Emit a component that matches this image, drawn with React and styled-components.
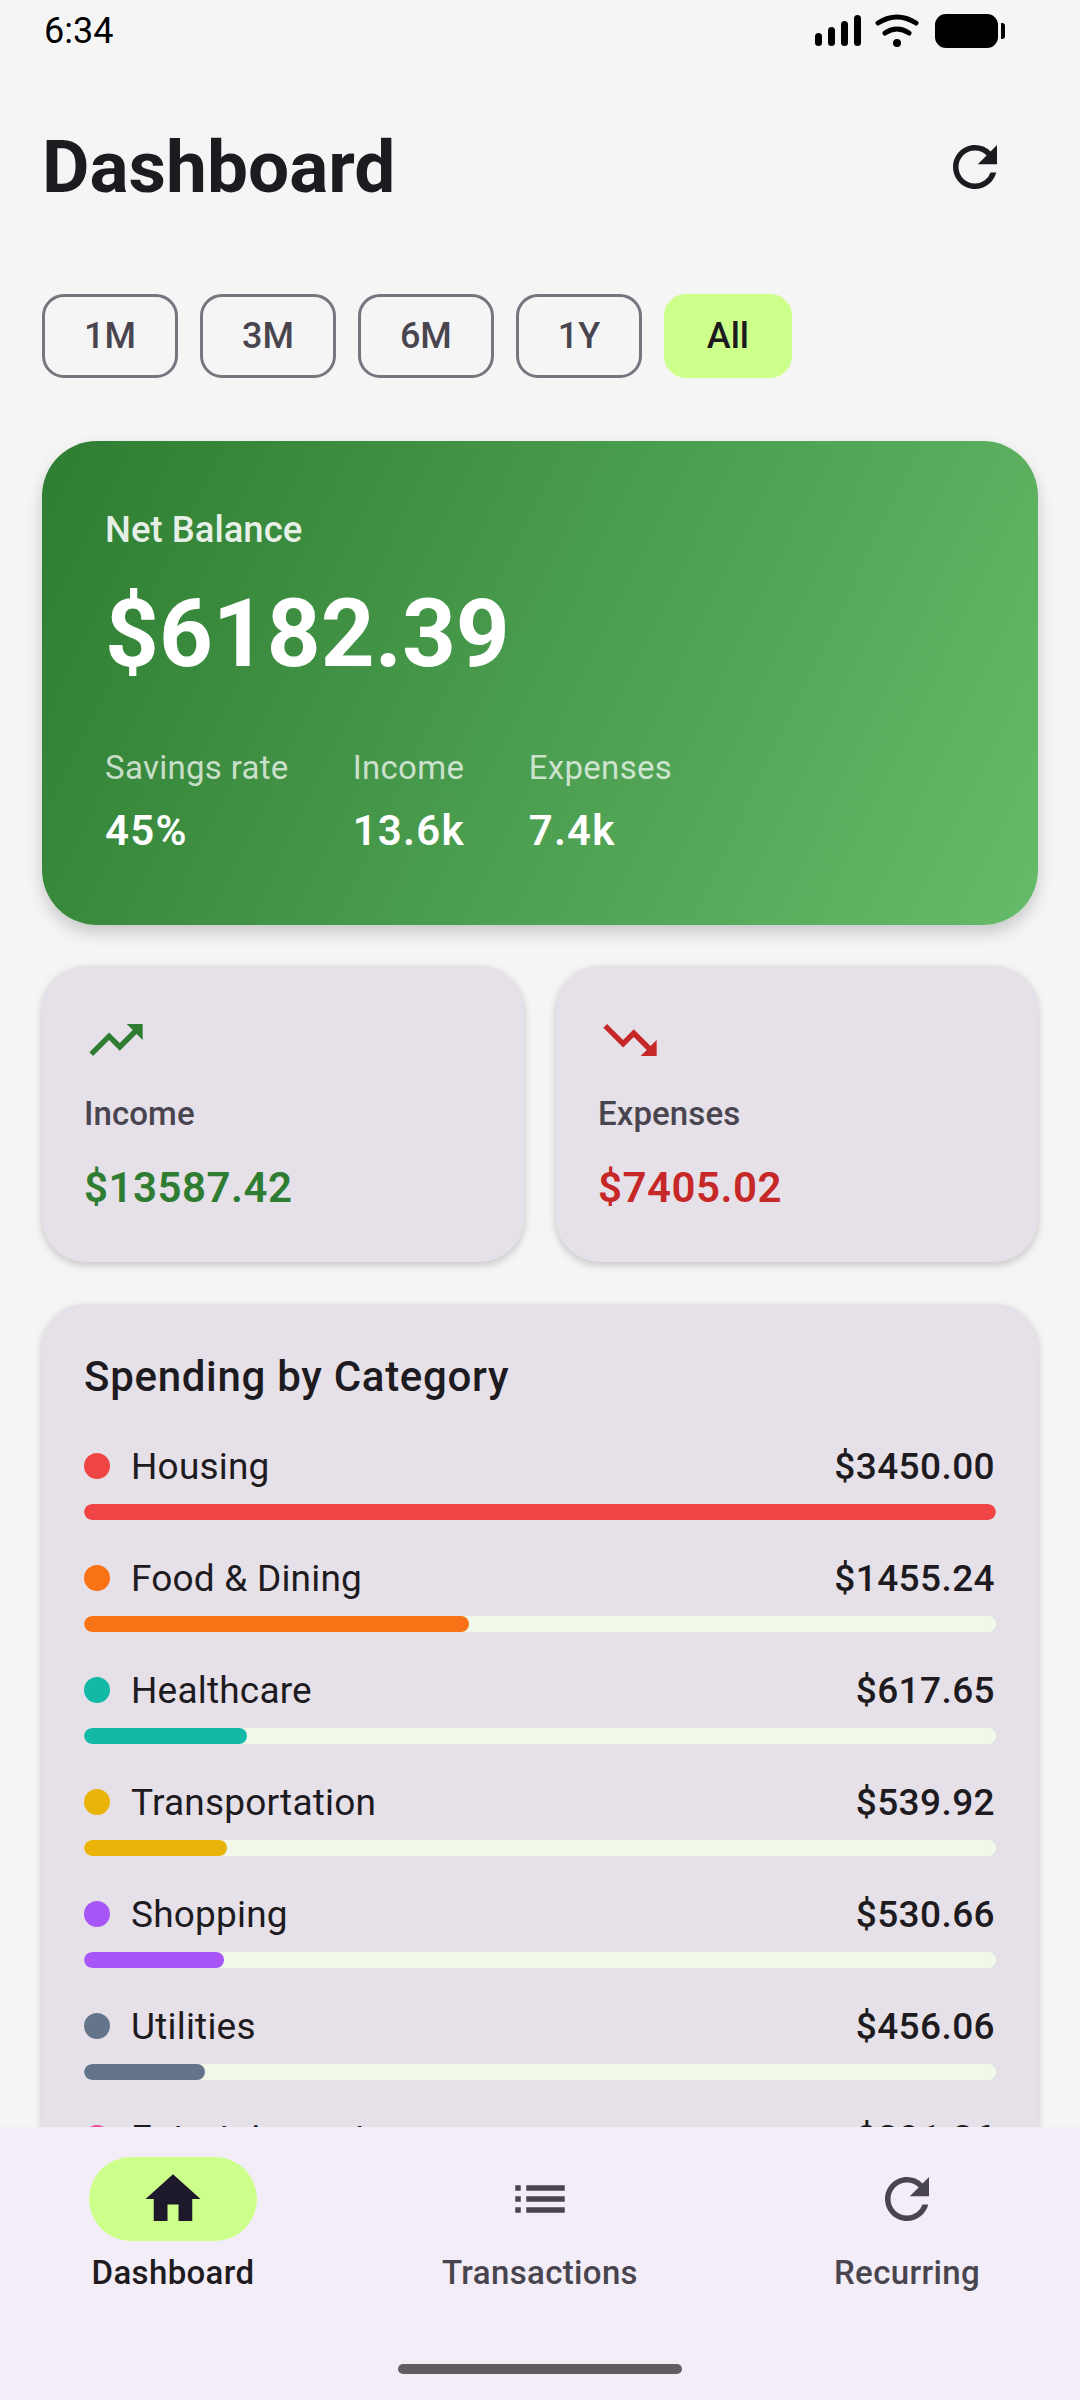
import React from 'react';
import styled, { createGlobalStyle } from 'styled-components';
import { MdRefresh, MdTrendingUp, MdTrendingDown, MdHome, MdList } from 'react-icons/md';

const GlobalStyle = createGlobalStyle`
  html, body {
    margin: 0;
    padding: 0;
    background: #f5f5f5;
    font-family: Roboto, "Noto Sans", sans-serif;
  }
  * { box-sizing: border-box; }
`;

const Screen = styled.div`
  width: 1080px;
  height: 2400px;
  display: flex;
  flex-direction: column;
  overflow: hidden;
  background: #f5f5f5;
  color: #1d1b20;
`;
const Scroll = styled.div`
  flex: 1;
  min-height: 0;
  overflow: hidden;
`;
const StatusBar = styled.div`
  height: 62px;
  padding: 10px 73px 0 44px;
  display: flex;
  justify-content: space-between;
  align-items: flex-start;
  font-size: 36px;
  line-height: 42px;
  color: #000;
`;
const StatusIcons = styled.svg`
  display: block;
  margin-top: 4px;
`;
const Header = styled.div`
  height: 210px;
  padding: 0 42px;
  display: flex;
  align-items: center;
  justify-content: space-between;
`;
const Title = styled.h1`
  margin: 0;
  font-size: 73px;
  line-height: 86px;
  font-weight: 700;
  color: #1d1b20;
`;
const RefreshButton = styled.div`
  width: 66px;
  height: 66px;
  margin-right: 30px;
  color: #1d1b20;
  font-size: 66px;
  line-height: 0;
`;
const Chips = styled.div`
  margin-top: 22px;
  padding: 0 42px;
  display: flex;
  gap: 22px;
`;
const Chip = styled.div`
  height: 84px;
  padding: 0 ${props => props.$pad || 39}px;
  display: flex;
  align-items: center;
  border-radius: 22px;
  border: 3px solid ${props => props.$active ? '#cdff8b' : '#79747e'};
  background: ${props => props.$active ? '#cdff8b' : 'transparent'};
  color: ${props => props.$active ? '#1d1b20' : '#49454f'};
  font-size: 36px;
  font-weight: 500;
`;
const BalanceCard = styled.div`
  margin: 63px 42px 0;
  height: 484px;
  padding: 65px 63px 0;
  border-radius: 55px;
  background: linear-gradient(115.8deg, #2e7d32 0%, #66bb6a 100%);
  color: #fff;
  box-shadow: 0 8px 16px rgba(0, 0, 0, 0.18);
`;
const BalanceLabel = styled.div`
  font-size: 36.5px;
  line-height: 48px;
  font-weight: 500;
  color: rgba(255, 255, 255, 0.88);
`;
const BalanceValue = styled.div`
  margin-top: 20px;
  font-size: 94px;
  line-height: 120px;
  font-weight: 700;
`;
const Stats = styled.div`
  margin-top: 54px;
  display: flex;
  gap: 64px;
`;
const StatLabel = styled.div`
  font-size: 33px;
  line-height: 40px;
  letter-spacing: 0.3px;
  color: rgba(255, 255, 255, 0.72);
`;
const StatValue = styled.div`
  margin-top: 18px;
  font-size: 42px;
  line-height: 50px;
  font-weight: 600;
  letter-spacing: 1.2px;
`;
const SummaryRow = styled.div`
  margin: 41px 42px 0;
  display: grid;
  grid-template-columns: 1fr 1fr;
  gap: 32px;
`;
const SummaryCard = styled.div`
  height: 296px;
  padding: 42px 42px 0;
  border-radius: 44px;
  background: #e6e0e9;
  box-shadow: 0 3px 8px rgba(0, 0, 0, 0.2);
`;
const SummaryIcon = styled.div`
  height: 66px;
  font-size: 64px;
  line-height: 0;
  color: ${props => props.$color};
`;
const SummaryLabel = styled.div`
  margin-top: 19px;
  font-size: 33px;
  line-height: 42px;
  font-weight: 500;
  letter-spacing: 0.1px;
  color: #49454f;
`;
const SummaryValue = styled.div`
  margin-top: 27px;
  font-size: 42px;
  line-height: 52px;
  font-weight: 600;
  letter-spacing: 0.5px;
  color: ${props => props.$color};
`;
const CategoryCard = styled.div`
  margin: 42px 42px 0;
  padding: 46px 42px 42px;
  border-radius: 44px;
  background: #e6e0e9;
  box-shadow: 0 3px 8px rgba(0, 0, 0, 0.2);
`;
const CategoryTitle = styled.h2`
  margin: 0 0 37px;
  font-size: 42px;
  line-height: 54px;
  font-weight: 500;
  letter-spacing: 0.7px;
  color: #1d1b20;
`;
const CategoryItem = styled.div`
  height: 112px;
`;
const CategoryRow = styled.div`
  height: 50px;
  display: flex;
  align-items: center;
  gap: 21px;
  font-size: 37px;
  letter-spacing: 0.2px;
`;
const Dot = styled.span`
  width: 26px;
  height: 26px;
  border-radius: 50%;
  background: ${props => props.$color};
`;
const CategoryName = styled.span`
  flex: 1;
`;
const CategoryAmount = styled.span`
  font-weight: 500;
  letter-spacing: 0.4px;
  margin-right: 1px;
`;
const Track = styled.div`
  margin-top: 13px;
  height: 16px;
  border-radius: 8px;
  overflow: hidden;
  background: #f1f8e9;
`;
const Fill = styled.div`
  height: 100%;
  border-radius: 8px;
  background: ${props => props.$color};
`;
const BottomNav = styled.div`
  position: relative;
  flex: none;
  height: 273px;
  padding: 30px 89px 0;
  display: flex;
  justify-content: space-between;
  background: #f3edf7;
`;
const NavItem = styled.div`
  width: 168px;
  display: flex;
  flex-direction: column;
  align-items: center;
  white-space: nowrap;
  color: ${props => props.$active ? '#1d1b20' : '#49454f'};
`;
const NavPill = styled.div`
  width: 168px;
  height: 84px;
  border-radius: 42px;
  display: flex;
  align-items: center;
  justify-content: center;
  font-size: 66px;
  color: ${props => props.$active ? '#1d192b' : '#49454f'};
  background: ${props => props.$active ? '#cdff8b' : 'transparent'};
`;
const NavLabel = styled.div`
  margin-top: 11px;
  font-size: 33px;
  line-height: 42px;
  font-weight: 500;
  letter-spacing: 0.35px;
`;
const HomeHandle = styled.div`
  position: absolute;
  left: 398px;
  bottom: 26px;
  width: 284px;
  height: 10px;
  border-radius: 5px;
  background: #605d62;
`;

const categories = [
  { name: 'Housing', amount: 3450.0, color: '#ef4444' },
  { name: 'Food & Dining', amount: 1455.24, color: '#f97316' },
  { name: 'Healthcare', amount: 617.65, color: '#14b8a6' },
  { name: 'Transportation', amount: 539.92, color: '#eab308' },
  { name: 'Shopping', amount: 530.66, color: '#a855f7' },
  { name: 'Utilities', amount: 456.06, color: '#64748b' },
  { name: 'Entertainment', amount: 391.36, color: '#ec4899' },
];

const StatusGlyphs = () => (
  <StatusIcons width="192" height="36" viewBox="0 0 192 36" fill="#000">
    <rect x="0" y="19" width="7" height="13" rx="3.5" />
    <rect x="13" y="13" width="7" height="19" rx="3.5" />
    <rect x="26" y="7" width="7" height="25" rx="3.5" />
    <rect x="39" y="1" width="7" height="31" rx="3.5" />
    <path d="M63 9 Q82 -3 101 9" fill="none" stroke="#000" strokeWidth="5" strokeLinecap="round" />
    <path d="M70 19 Q82 11 94 19" fill="none" stroke="#000" strokeWidth="5" strokeLinecap="round" />
    <circle cx="82" cy="29" r="4" />
    <rect x="120" y="0" width="63" height="34" rx="11" />
    <path d="M186 9 h1 a3 3 0 0 1 3 3 v10 a3 3 0 0 1 -3 3 h-1 z" />
  </StatusIcons>
);

const App = () => {
  const max = categories[0].amount;
  return (
    <Screen>
      <GlobalStyle />
      <Scroll>
        <StatusBar>
          <span>6:34</span>
          <StatusGlyphs />
        </StatusBar>
        <Header>
          <Title>Dashboard</Title>
          <RefreshButton><MdRefresh /></RefreshButton>
        </Header>
        <Chips>
          <Chip>1M</Chip>
          <Chip>3M</Chip>
          <Chip>6M</Chip>
          <Chip>1Y</Chip>
          <Chip $active $pad={39.5}>All</Chip>
        </Chips>
        <BalanceCard>
          <BalanceLabel>Net Balance</BalanceLabel>
          <BalanceValue>$6182.39</BalanceValue>
          <Stats>
            <div>
              <StatLabel>Savings rate</StatLabel>
              <StatValue>45%</StatValue>
            </div>
            <div>
              <StatLabel>Income</StatLabel>
              <StatValue>13.6k</StatValue>
            </div>
            <div>
              <StatLabel>Expenses</StatLabel>
              <StatValue>7.4k</StatValue>
            </div>
          </Stats>
        </BalanceCard>
        <SummaryRow>
          <SummaryCard>
            <SummaryIcon $color="#2e7d32"><MdTrendingUp /></SummaryIcon>
            <SummaryLabel>Income</SummaryLabel>
            <SummaryValue $color="#2e7d32">$13587.42</SummaryValue>
          </SummaryCard>
          <SummaryCard>
            <SummaryIcon $color="#c62828"><MdTrendingDown /></SummaryIcon>
            <SummaryLabel>Expenses</SummaryLabel>
            <SummaryValue $color="#c62828">$7405.02</SummaryValue>
          </SummaryCard>
        </SummaryRow>
        <CategoryCard>
          <CategoryTitle>Spending by Category</CategoryTitle>
          {categories.map(cat => (
            <CategoryItem key={cat.name}>
              <CategoryRow>
                <Dot $color={cat.color} />
                <CategoryName>{cat.name}</CategoryName>
                <CategoryAmount>${cat.amount.toFixed(2)}</CategoryAmount>
              </CategoryRow>
              <Track>
                <Fill $color={cat.color} style={{ width: `${(cat.amount / max) * 100}%` }} />
              </Track>
            </CategoryItem>
          ))}
        </CategoryCard>
      </Scroll>
      <BottomNav>
        <NavItem $active>
          <NavPill $active><MdHome /></NavPill>
          <NavLabel>Dashboard</NavLabel>
        </NavItem>
        <NavItem>
          <NavPill><MdList /></NavPill>
          <NavLabel>Transactions</NavLabel>
        </NavItem>
        <NavItem>
          <NavPill><MdRefresh /></NavPill>
          <NavLabel>Recurring</NavLabel>
        </NavItem>
        <HomeHandle />
      </BottomNav>
    </Screen>
  );
};

export default App;
